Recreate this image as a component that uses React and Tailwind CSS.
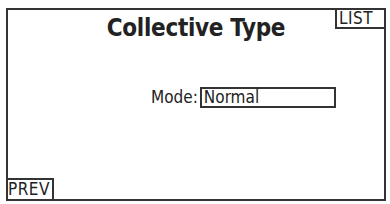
const App = () => {
  return (
    <div
      className="w-[390px] h-[204px] bg-white pt-[8px] pl-[6px]"
      style={{ fontFamily: '"DejaVu Sans Condensed", "DejaVu Sans", sans-serif' }}
    >
      <div className="relative w-[380px] h-[193px] border-2 border-[#333] flex flex-col text-[#222]">
        {/* header */}
        <div className="h-[30px] flex items-start justify-center">
          <h1 className="text-[24px] font-bold leading-none mt-[6px] tracking-[-0.3px]">
            Collective Type
          </h1>
        </div>
        <div className="absolute top-[-1px] right-[-2px] w-[51px] h-[20px] border-2 border-[#333] border-t-0 flex items-center pl-[2px] text-[17px] leading-none tracking-[0.5px]">
          LIST
        </div>

        {/* mode row */}
        <div className="mt-[47px] flex items-center pl-[143px]">
          <span className="text-[17px] leading-none mr-[2px]">Mode:</span>
          <div className="w-[136px] h-[21px] border-2 border-[#333] flex items-center pl-[2px] text-[17px] leading-none">
            Normal
          </div>
        </div>

        {/* footer */}
        <div className="mt-auto flex">
          <div className="w-[46px] h-[21px] border-2 border-[#333] border-l-0 border-b-0 flex items-center text-[17px] leading-none tracking-[0.5px]">
            PREV
          </div>
        </div>
      </div>
    </div>
  );
};

export default App;
